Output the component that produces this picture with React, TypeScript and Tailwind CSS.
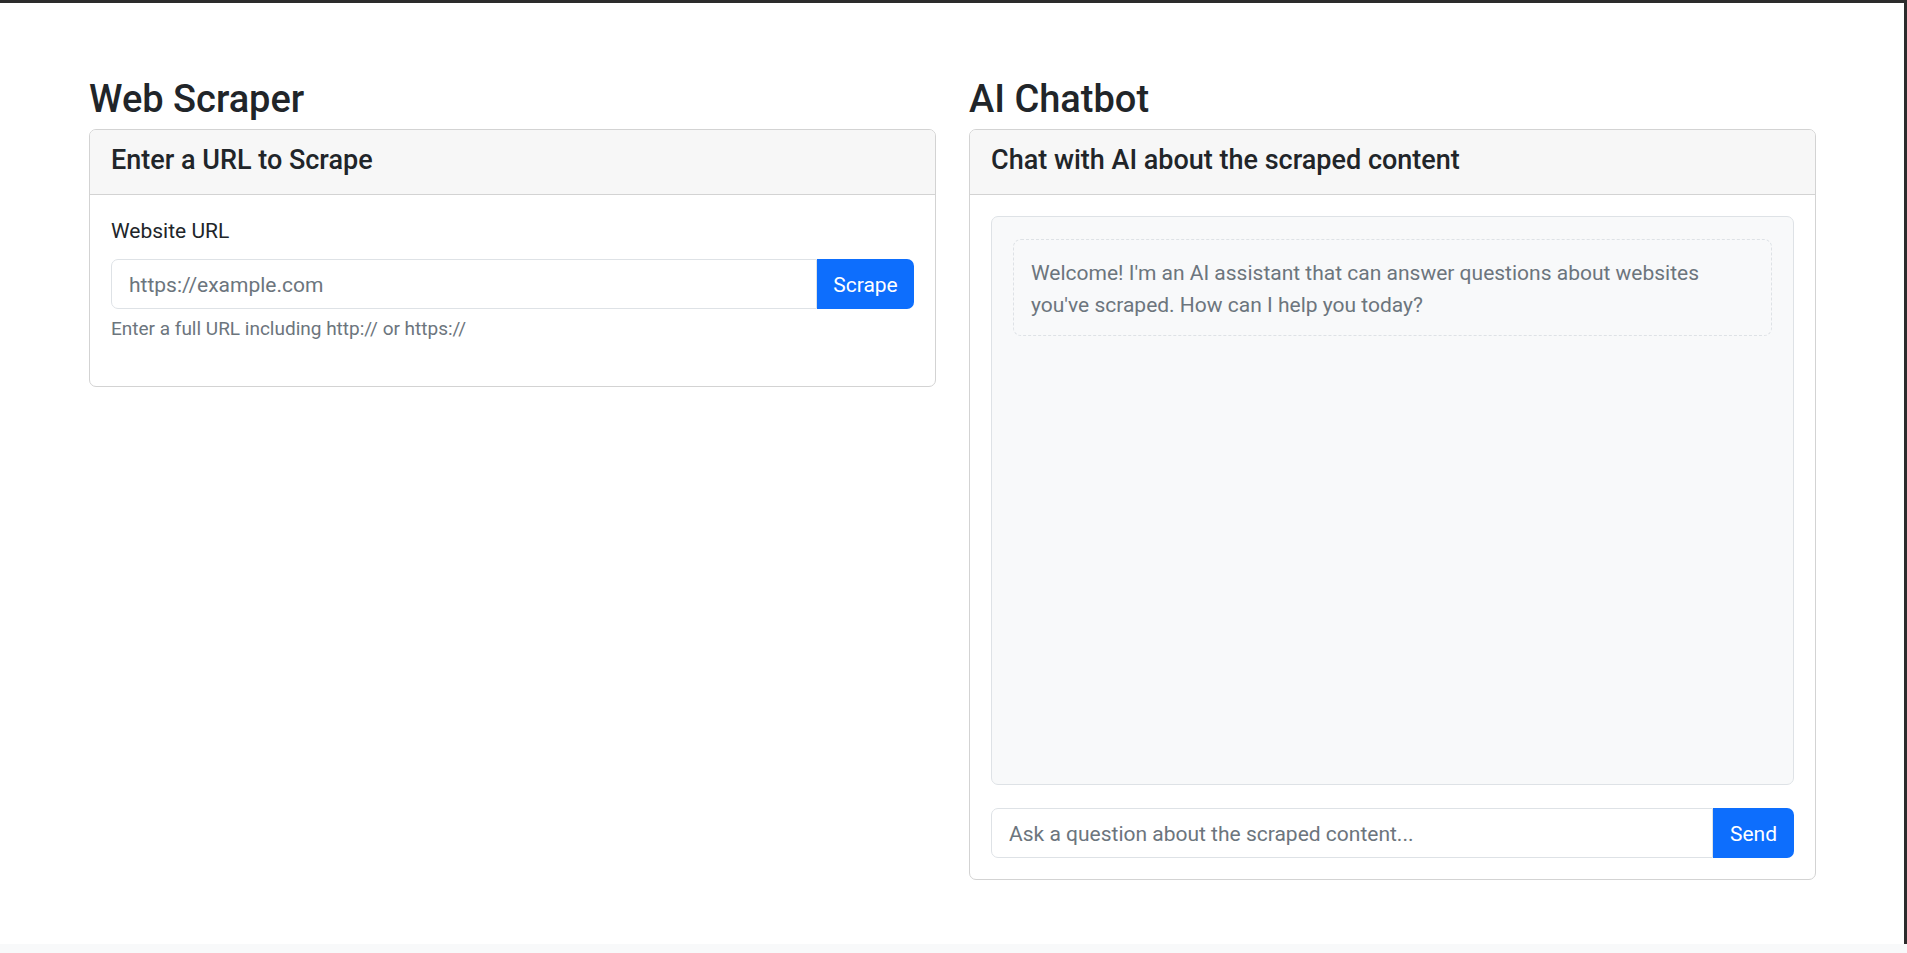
import { useState } from 'react';

const Card = ({ title, children }: { title: string; children: React.ReactNode }) => (
  <div className="overflow-hidden rounded-[7px] border border-[#d3d3d3] bg-white">
    <div className="h-[65px] border-b border-[#d3d3d3] bg-[#f7f7f7] px-[21px] pt-[14px]">
      <h4 className="text-[27px] font-medium leading-[32px] text-[#212529]">{title}</h4>
    </div>
    {children}
  </div>
);

const App = () => {
  const [url, setUrl] = useState('');
  const [question, setQuestion] = useState('');

  return (
    <div className="flex h-[953px] flex-col bg-white font-['Segoe_UI',Roboto,'Noto_Sans',sans-serif] text-[#212529]">
      <div className="h-[3px] w-full shrink-0 bg-[#2c2c2c]" />
      <div className="flex min-h-0 flex-1 border-r-[3px] border-[#2c2c2c]">
        <div className="grid flex-1 grid-cols-2 items-start gap-[33px] pl-[89px] pr-[88px] pt-[74px]">
          {/* scraper */}
          <div>
            <h2 className="mb-[8px] text-[38px] font-medium leading-[44px]">Web Scraper</h2>
            <Card title="Enter a URL to Scrape">
              <div className="px-[21px] pb-[44px] pt-[21px]">
                <label className="mb-[13px] block pt-[1px] text-[21px] leading-[29px]">Website URL</label>
                <div className="flex h-[50px]">
                  <input
                    value={url}
                    onChange={(e) => setUrl(e.target.value)}
                    placeholder="https://example.com"
                    className="min-w-0 flex-1 rounded-l-[7px] border border-[#dee2e6] px-[17px] pt-[3px] text-[21px] outline-none placeholder:text-[#6c757d]"
                  />
                  <button className="w-[97px] rounded-r-[7px] bg-[#0d6efd] pt-[3px] text-[21px] text-white">Scrape</button>
                </div>
                <div className="mt-[7px] text-[19px] leading-[26px] text-[#6c757d]">
                  Enter a full URL including http:// or https://
                </div>
              </div>
            </Card>
          </div>

          {/* chatbot */}
          <div>
            <h2 className="mb-[8px] text-[38px] font-medium leading-[44px]">AI Chatbot</h2>
            <Card title="Chat with AI about the scraped content">
              <div className="px-[21px] pb-[21px] pt-[21px]">
                <div className="h-[569px] rounded-[7px] border border-[#dee2e6] bg-[#f8f9fa] px-[21px] pt-[22px]">
                  <div className="rounded-[8px] border border-dashed border-[#dee2e6] px-[17px] pb-[14px] pt-[18px] text-[21px] leading-[31.7px] text-[#6c757d]">
                    Welcome! I'm an AI assistant that can answer questions about websites you've scraped. How can I help
                    you today?
                  </div>
                </div>
                <div className="mt-[23px] flex h-[50px]">
                  <input
                    value={question}
                    onChange={(e) => setQuestion(e.target.value)}
                    placeholder="Ask a question about the scraped content..."
                    className="min-w-0 flex-1 rounded-l-[7px] border border-[#dee2e6] px-[17px] pt-[3px] text-[21px] outline-none placeholder:text-[#6c757d]"
                  />
                  <button className="w-[81px] rounded-r-[7px] bg-[#0d6efd] pt-[3px] text-[21px] text-white">Send</button>
                </div>
              </div>
            </Card>
          </div>
        </div>
      </div>
      <div className="h-[9px] w-full shrink-0 bg-[#f8f9fa]" />
    </div>
  );
};

export default App;
